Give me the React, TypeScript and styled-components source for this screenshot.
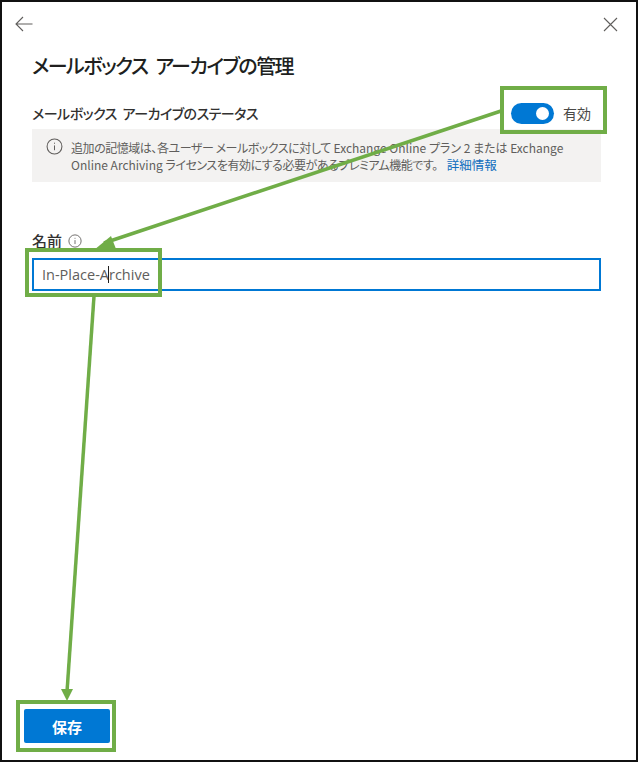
import React from "react";
import styled, { createGlobalStyle } from "styled-components";

const Global = createGlobalStyle`
  html, body { margin: 0; padding: 0; background: #fff; }
  * { box-sizing: border-box; }
`;

const Frame = styled.div`
  position: relative;
  width: 638px;
  height: 762px;
  border: 2px solid #111;
  background: #fff;
  font-family: "Noto Sans CJK JP", "Open Sans", sans-serif;
  font-feature-settings: "palt";
  color: #323130;
  padding: 12px 35px 17px 30px;
  display: flex;
  flex-direction: column;
  overflow: hidden;
`;

const TopBar = styled.div`
  display: flex;
  justify-content: space-between;
  align-items: center;
  height: 20px;
  margin: 0 -17px 0 -17px;
`;

const IconButton = styled.span`
  display: flex;
  color: #605e5c;
`;

const Title = styled.h1`
  margin: 17px 0 0;
  font-size: 20px;
  line-height: 30px;
  font-weight: 500;
  letter-spacing: -1.55px;
  word-spacing: 5px;
  color: #201f1e;
`;

const StatusRow = styled.div`
  display: flex;
  justify-content: space-between;
  align-items: center;
  height: 24px;
  margin-top: 20px;
`;

const Label = styled.span`
  font-size: 14px;
  font-weight: 500;
  line-height: 20px;
  letter-spacing: -0.5px;
  word-spacing: 3px;
  color: #323130;
`;

const NameLabel = styled(Label)`
  font-size: 15px;
  letter-spacing: 0;
`;

const ToggleGroup = styled.div`
  display: flex;
  align-items: center;
  gap: 9px;
  margin-right: 10px;
`;

const Track = styled.span`
  position: relative;
  width: 43px;
  height: 21px;
  border-radius: 11px;
  background: #0078d4;
`;

const Knob = styled.span`
  position: absolute;
  right: 5px;
  top: 4px;
  width: 13px;
  height: 13px;
  border-radius: 50%;
  background: #fff;
`;

const ToggleText = styled.span`
  font-size: 14px;
  color: #4a4947;
`;

const Notice = styled.div`
  display: flex;
  gap: 8px;
  margin-top: 4px;
  height: 53px;
  background: #f3f2f1;
  padding: 10px 12px 0 14px;
`;

const NoticeIcon = styled.span`
  display: flex;
  flex: none;
  margin-top: -1px;
  height: 17px;
  color: #605e5c;
`;

const NoticeText = styled.p`
  margin: 0;
  font-size: 12px;
  line-height: 17px;
  color: #605e5c;
`;

const Tight = styled.span`
  letter-spacing: -0.45px;
`;

const InfoLink = styled.a`
  color: #106ebe;
  font-size: 12.5px;
  margin-left: 9px;
`;

const NameLabelRow = styled.div`
  display: flex;
  align-items: center;
  gap: 6px;
  margin-top: 49px;
  height: 20px;
`;

const NameIcon = styled.span`
  display: flex;
  color: #605e5c;
`;

const Input = styled.div`
  position: relative;
  display: flex;
  align-items: center;
  margin-top: 7px;
  height: 33px;
  border: 2px solid #0078d4;
  padding-left: 8px;
  font-family: "Open Sans", sans-serif;
  font-size: 14.5px;
  color: #605e5c;
`;

const Caret = styled.span`
  display: inline-block;
  width: 1px;
  height: 17px;
  background: #201f1e;
  margin: 0 -0.5px;
`;

const Spacer = styled.div`
  flex: 1;
`;

const SaveButton = styled.button`
  width: 86px;
  height: 34px;
  margin-left: -8px;
  border: none;
  border-radius: 2px;
  background: #0078d4;
  color: #fff;
  font-family: inherit;
  font-size: 15px;
  font-weight: 700;
  padding: 0;
`;

const Annotations = styled.svg`
  position: absolute;
  left: -2px;
  top: -2px;
  pointer-events: none;
`;

const Info = ({ size }: { size: number }) => (
  <svg width={size} height={size} viewBox="0 0 16 16" fill="none" stroke="currentColor" strokeWidth="1">
    <circle cx="8" cy="8" r="7" />
    <path d="M8 7v4.5" />
    <path d="M8 4.4v1" />
  </svg>
);

export default function App() {
  return (
    <>
      <Global />
      <Frame>
        <TopBar>
          <IconButton>
            <svg width="18" height="16" viewBox="0 0 18 16" fill="none" stroke="currentColor" strokeWidth="1.1">
              <path d="M17.5 8H1M8 1 1 8l7 7" />
            </svg>
          </IconButton>
          <IconButton>
            <svg width="15" height="15" viewBox="0 0 15 15" fill="none" stroke="currentColor" strokeWidth="1.1">
              <path d="M1 1l13 13M14 1 1 14" />
            </svg>
          </IconButton>
        </TopBar>
        <Title>メールボックス アーカイブの管理</Title>
        <StatusRow>
          <Label>メールボックス アーカイブのステータス</Label>
          <ToggleGroup>
            <Track>
              <Knob />
            </Track>
            <ToggleText>有効</ToggleText>
          </ToggleGroup>
        </StatusRow>
        <Notice>
          <NoticeIcon>
            <Info size={17} />
          </NoticeIcon>
          <NoticeText>
            <Tight>追加の記憶域は、各ユーザー メールボックスに対して</Tight> Exchange Online プラン 2 または Exchange Online Archiving <Tight>ライセンスを有効にする必要があるプレミアム機能です。</Tight>
            <InfoLink>詳細情報</InfoLink>
          </NoticeText>
        </Notice>
        <NameLabelRow>
          <NameLabel>名前</NameLabel>
          <NameIcon>
            <Info size={14} />
          </NameIcon>
        </NameLabelRow>
        <Input>
          In-Place-A<Caret />rchive
        </Input>
        <Spacer />
        <SaveButton>保存</SaveButton>
        <Annotations width="638" height="762" viewBox="0 0 638 762" fill="none" stroke="#70ad47" strokeWidth="4">
          <rect x="502" y="88" width="103" height="44" />
          <rect x="27" y="250" width="133" height="45" />
          <rect x="18" y="702" width="96" height="48" />
          <path d="M501 111 104 243" strokeWidth="3.5" />
          <path d="M94 250l17-14 5 13z" fill="#70ad47" stroke="none" />
          <path d="M94 296 67 692" strokeWidth="3.5" />
          <path d="M61 689h12l-6 12z" fill="#70ad47" stroke="none" />
        </Annotations>
      </Frame>
    </>
  );
}
